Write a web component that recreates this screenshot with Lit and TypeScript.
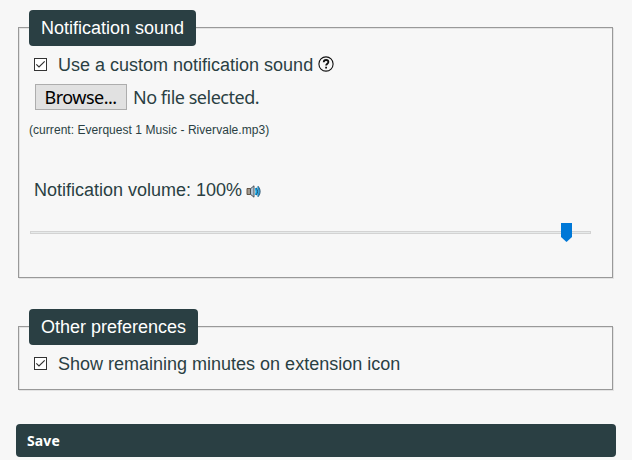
import { LitElement, html, css } from "lit";
import { customElement, property } from "lit/decorators.js";

@customElement("pref-check")
class PrefCheck extends LitElement {
  @property() label = "";
  static styles = css`
    :host { display: flex; align-items: center; height: 22px; font-size: 18px; line-height: 22px; }
    .box { display: block; width: 13px; height: 13px; margin: 0 11px 2px 0; flex: none; }
    .label { white-space: nowrap; }
  `;
  render() {
    return html`
      <svg class="box" viewBox="0 0 13 13">
        <rect x=".5" y=".5" width="12" height="12" fill="#fff" stroke="#333" />
        <path d="M2.3 6.3 5 9 10.7 3.3" fill="none" stroke="#333" stroke-width="1.2" />
      </svg>
      <span class="label">${this.label}</span>
      <slot></slot>
    `;
  }
}

@customElement("pref-group")
class PrefGroup extends LitElement {
  @property() heading = "";
  static styles = css`
    :host {
      display: flex; flex-direction: column; box-sizing: border-box; width: 595px;
      border: 1px solid #999; box-shadow: 1px 1px 0 #e3e3e3, inset 1px 1px 0 #e3e3e3;
    }
    .legend {
      align-self: flex-start; box-sizing: border-box; height: 36px; margin: -18px 0 0 10px;
      padding: 0 12px; border-radius: 4px; background: #2a3f43; color: #fff;
      font-size: 18px; line-height: 36px; white-space: nowrap;
    }
  `;
  render() {
    return html`<div class="legend">${this.heading}</div><slot></slot>`;
  }
}

@customElement("app-root")
class AppRoot extends LitElement {
  static styles = css`
    :host {
      display: block; width: 636px; height: 461px; overflow: hidden; background: #fff;
      font-family: "Liberation Sans", Arial, sans-serif; color: #2a3f43;
    }
    .page {
      display: flex; flex-direction: column; box-sizing: border-box;
      width: 632px; height: 460px; padding: 27px 0 0 18px; background: #f7f7f7;
    }
    .sound { height: 251px; }
    .other { height: 64px; margin-top: 48px; }
    .first { margin: 8px 0 0 15px; }
    .help { width: 16px; height: 16px; margin: -3px 0 0 4.5px; }
    .file { display: flex; align-items: center; height: 26px; margin: 8px 0 0 16px; font: 18px/26px "Noto Sans", sans-serif; white-space: nowrap; }
    .browse {
      box-sizing: border-box; width: 92px; height: 26px; margin-right: 6px; padding: 0 0 0 8.5px;
      border: 1px solid #adadad; background: #e1e1e1; color: #000; font: inherit; line-height: 24px; text-align: left; letter-spacing: -.5px;
    }
    .none { letter-spacing: -.48px; }
    .current { margin: 13px 0 0 10px; font-size: 12px; line-height: 14px; letter-spacing: .05px; white-space: nowrap; }
    .volume { display: flex; align-items: center; height: 22px; margin: 42px 0 0 15px; font-size: 18px; line-height: 22px; white-space: nowrap; }
    .speaker { width: 15px; height: 13px; margin: 2px 0 0 4px; }
    .slider { display: flex; align-items: center; height: 19px; margin: 22px 0 0 11px; }
    .track { box-sizing: border-box; height: 3px; border: 1px solid #d3d3d3; background: #e7eaea; }
    .before { width: 531px; border-right: 0; }
    .after { width: 19px; border-left: 0; }
    .thumb { width: 11px; height: 19px; background: #0078d7; clip-path: polygon(0 0, 100% 0, 100% 14px, 50% 100%, 0 14px); }
    .save {
      box-sizing: border-box; width: 600px; height: 33px; margin: 34px 0 0 -2px; padding: 0 11px;
      border: 0; border-radius: 4px; background: #2a3f43; color: #fff;
      font: bold 14px/33px "Noto Sans", sans-serif; text-align: left; letter-spacing: .1px;
    }
  `;
  render() {
    return html`
      <main class="page">
        <pref-group class="sound" heading="Notification sound">
          <pref-check class="first" label="Use a custom notification sound">
            <svg class="help" viewBox="0 0 16 16">
              <circle cx="8" cy="8" r="7.1" fill="none" stroke="#111" stroke-width="1.1" />
              <path d="M5.7 6.2C5.8 4.6 6.8 4 8.1 4c1.4 0 2.3.8 2.3 2 0 1.7-2.3 1.7-2.3 3.6" fill="none" stroke="#111" stroke-width="1.8" />
              <path d="M7.2 10.7h1.8v1.7H7.2z" fill="#111" />
            </svg>
          </pref-check>
          <div class="file"><button class="browse">Browse...</button><span class="none">No file selected.</span></div>
          <div class="current">(current: Everquest 1 Music - Rivervale.mp3)</div>
          <div class="volume">
            <span>Notification volume: 100%</span>
            <svg class="speaker" viewBox="0 0 15 13">
              <path d="M1 3.5h3.5v6H1z" fill="#a39a8e" stroke="#5b4a38" stroke-width=".9" />
              <path d="M4.5 3.7 8 .8v11.4L4.5 9.3z" fill="#b4c3d1" stroke="#3f454d" stroke-width=".9" />
              <path d="M8.8 3h2.4q1.4 3.5 0 7H8.8q1.2-3.5 0-7z" fill="#16a6e4" />
              <path d="M11 1.6h1.2q3.4 4.9 0 9.8H11q2.6-4.9 0-9.8z" fill="#1996d6" />
              <path d="M10.6 2.8q2.2 3.7 0 7.4M12.2 1.2q4 5.3 0 10.6" fill="none" stroke="#123c5c" stroke-width=".8" />
            </svg>
          </div>
          <div class="slider"><span class="track before"></span><span class="thumb"></span><span class="track after"></span></div>
        </pref-group>
        <pref-group class="other" heading="Other preferences">
          <pref-check class="first" label="Show remaining minutes on extension icon"></pref-check>
        </pref-group>
        <button class="save">Save</button>
      </main>
    `;
  }
}
